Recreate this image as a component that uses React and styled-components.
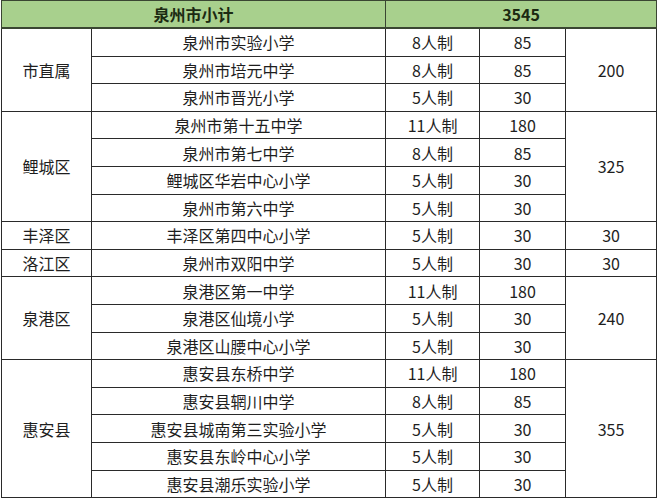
import React from 'react';
import styled, { createGlobalStyle } from 'styled-components';

const GlobalStyle = createGlobalStyle`
  html, body {
    margin: 0;
    padding: 0;
    background: #ffffff;
  }
`;

const Page = styled.div`
  width: 659px;
  height: 500px;
  padding-left: 1px;
  box-sizing: border-box;
  background: #ffffff;
  overflow: hidden;
`;

const Table = styled.table`
  width: 655px;
  border-collapse: collapse;
  table-layout: fixed;
  font-family: "Noto Sans CJK SC", "Noto Sans", sans-serif;
  font-size: 16px;
  color: #1e1e1e;
`;

const Col = styled.col`
  width: ${(p) => p.$w}px;
`;

const HeadCell = styled.th`
  height: 26px;
  padding: 0;
  background: #a8d08d;
  color: #1c2a12;
  font-weight: 700;
  font-size: 16px;
  text-align: center;
  border: 1px solid #3a4632;
  border-bottom: 2px solid #3a4632;
`;

const Cell = styled.td`
  height: 26.6px;
  padding: 0;
  text-align: center;
  vertical-align: middle;
  border: 1px solid #2a2a2a;
  line-height: 1;
  white-space: nowrap;
`;

const widths = [90, 294, 94, 86, 91];

const groups = [
  {
    district: '市直属',
    total: '200',
    rows: [
      ['泉州市实验小学', '8人制', '85'],
      ['泉州市培元中学', '8人制', '85'],
      ['泉州市晋光小学', '5人制', '30'],
    ],
  },
  {
    district: '鲤城区',
    total: '325',
    rows: [
      ['泉州市第十五中学', '11人制', '180'],
      ['泉州市第七中学', '8人制', '85'],
      ['鲤城区华岩中心小学', '5人制', '30'],
      ['泉州市第六中学', '5人制', '30'],
    ],
  },
  {
    district: '丰泽区',
    total: '30',
    rows: [['丰泽区第四中心小学', '5人制', '30']],
  },
  {
    district: '洛江区',
    total: '30',
    rows: [['泉州市双阳中学', '5人制', '30']],
  },
  {
    district: '泉港区',
    total: '240',
    rows: [
      ['泉港区第一中学', '11人制', '180'],
      ['泉港区仙境小学', '5人制', '30'],
      ['泉港区山腰中心小学', '5人制', '30'],
    ],
  },
  {
    district: '惠安县',
    total: '355',
    rows: [
      ['惠安县东桥中学', '11人制', '180'],
      ['惠安县辋川中学', '8人制', '85'],
      ['惠安县城南第三实验小学', '5人制', '30'],
      ['惠安县东岭中心小学', '5人制', '30'],
      ['惠安县潮乐实验小学', '5人制', '30'],
    ],
  },
];

export default function App() {
  return (
    <Page lang="zh-CN">
      <GlobalStyle />
      <Table>
        <colgroup>
          {widths.map((w, i) => (
            <Col key={i} $w={w} />
          ))}
        </colgroup>
        <thead>
          <tr>
            <HeadCell colSpan={2}>泉州市小计</HeadCell>
            <HeadCell colSpan={3}>3545</HeadCell>
          </tr>
        </thead>
        <tbody>
          {groups.map((g) =>
            g.rows.map((r, i) => (
              <tr key={g.district + i}>
                {i === 0 && <Cell rowSpan={g.rows.length}>{g.district}</Cell>}
                <Cell>{r[0]}</Cell>
                <Cell>{r[1]}</Cell>
                <Cell>{r[2]}</Cell>
                {i === 0 && <Cell rowSpan={g.rows.length}>{g.total}</Cell>}
              </tr>
            ))
          )}
        </tbody>
      </Table>
    </Page>
  );
}
